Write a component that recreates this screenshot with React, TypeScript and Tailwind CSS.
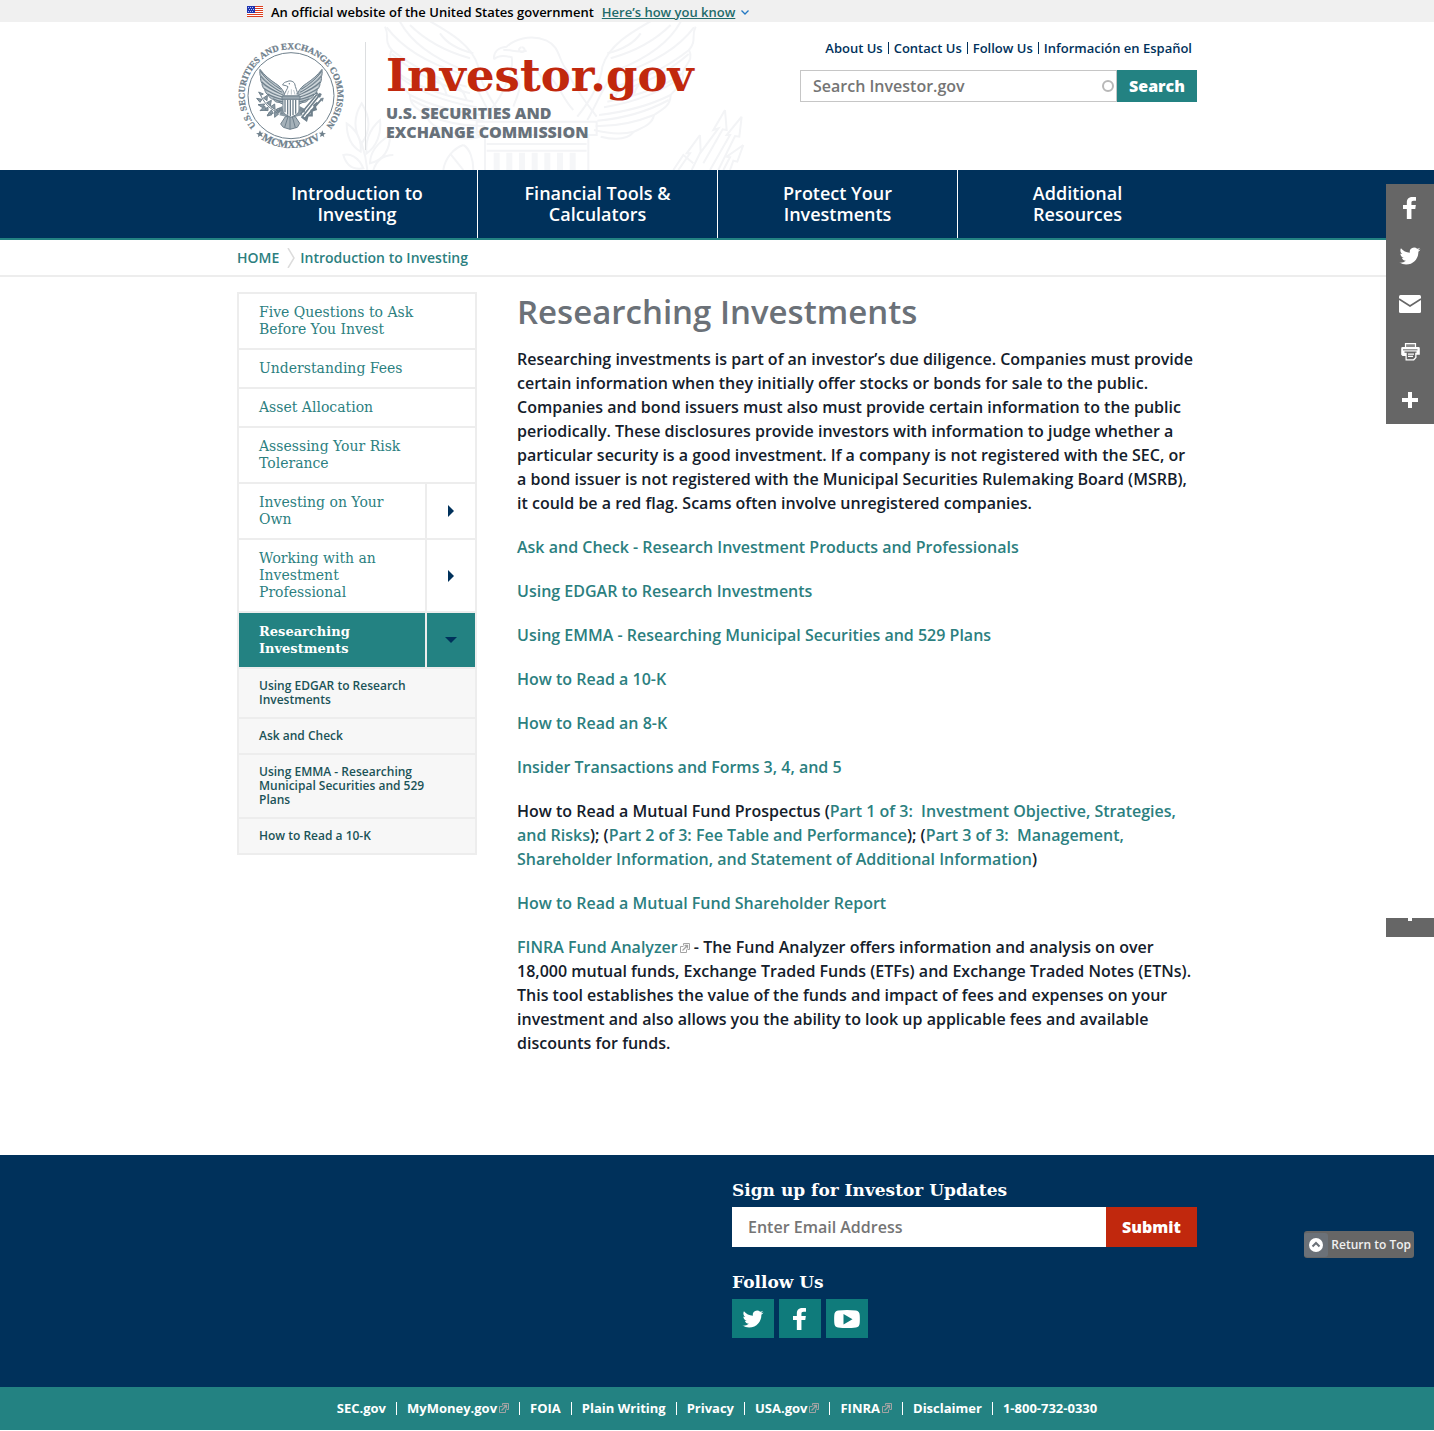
import React from 'react';

const TWITTER =
  'M28 8.557a9.913 9.913 0 0 1-2.828.775 4.93 4.93 0 0 0 2.166-2.725 9.738 9.738 0 0 1-3.13 1.194 4.92 4.92 0 0 0-3.593-1.55 4.924 4.924 0 0 0-4.794 6.049c-4.09-.21-7.72-2.17-10.15-5.15a4.942 4.942 0 0 0-.665 2.477c0 1.71.87 3.214 2.19 4.1a4.968 4.968 0 0 1-2.23-.616v.06c0 2.39 1.7 4.38 3.952 4.83-.414.115-.85.174-1.297.174-.318 0-.626-.03-.928-.086a4.935 4.935 0 0 0 4.6 3.42 9.893 9.893 0 0 1-6.114 2.107c-.398 0-.79-.023-1.175-.068a13.953 13.953 0 0 0 7.55 2.213c9.056 0 14.01-7.507 14.01-14.013 0-.213-.005-.426-.015-.637.96-.695 1.795-1.56 2.455-2.55z';
const FACEBOOK =
  'M22 5.16c-.406-.054-1.806-.16-3.43-.16-3.4 0-5.733 1.825-5.733 5.17v2.882H9v3.913h3.837V27h4.604V16.965h3.823l.587-3.913h-4.41v-2.5c0-1.123.347-1.903 2.198-1.903H22V5.16z';

function Glyph({ d, className }: { d: string; className: string }) {
  return (
    <svg viewBox="0 0 32 32" className={className} fill="currentColor" aria-hidden="true">
      <path d={d} />
    </svg>
  );
}

function FlagIcon() {
  return (
    <svg viewBox="0 0 16 11" className="h-[11px] w-4" shapeRendering="crispEdges" aria-hidden="true">
      <rect width="16" height="11" fill="#fff" />
      {[0, 2, 4, 6, 8, 10].map((y) => (
        <rect key={y} y={y} width="16" height="1" fill="#db3e1f" />
      ))}
      <rect width="8" height="7" fill="#1e33b1" />
      {[1, 3, 5].flatMap((y) => [1, 3, 5].map((x) => <rect key={`${x}-${y}`} x={x + (y === 3 ? 1 : 0)} y={y} width="1" height="1" fill="#b9c3ee" />))}
    </svg>
  );
}

function SealWing() {
  return (
    <g>
      <path
        d="M78 94 C77 104 77 110 80 116 C79 124 80 130 84 136 C84 144 87 150 92 154 C93 162 97 168 103 171 C105 178 111 183 118 184 C121 190 128 194 135 193 L150 200 L152 176 C152 160 140 146 124 136 C106 124 92 112 78 94Z"
        fill="#b4bfc6"
        stroke="#6f808c"
        strokeWidth="3"
      />
      <g stroke="#6f808c" strokeWidth="3.4" fill="none">
        <path d="M79 98 C92 120 112 138 140 154" />
        <path d="M80 114 C94 132 116 148 143 163" />
        <path d="M83 132 C97 146 118 158 146 170" />
        <path d="M90 151 C104 162 122 170 147 178" />
        <path d="M101 168 C114 176 130 181 148 185" />
        <path d="M117 182 C128 188 138 191 149 192" />
      </g>
      <g stroke="#fff" strokeWidth="1.4" fill="none">
        <path d="M82 109 C98 128 116 141 140 158" />
        <path d="M85 127 C100 142 120 153 143 167" />
        <path d="M90 146 C106 157 122 164 146 174" />
        <path d="M101 163 C114 171 130 176 147 181" />
      </g>
    </g>
  );
}

function Seal() {
  return (
    <svg viewBox="0 0 342 342" className="h-[114px] w-[114px]" role="img" aria-label="SEC seal">
      <defs>
        <path id="seal-top" d="M73 271 A139 139 0 1 1 269 271" />
        <path id="seal-bottom" d="M66 290 A157 157 0 0 0 276 290" />
      </defs>
      <circle cx="171" cy="173" r="129" fill="none" stroke="#6f808c" strokeWidth="3" />
      <g fill="#6f808c" stroke="#6f808c" strokeWidth="0.8" fontFamily="'Liberation Serif', serif" textAnchor="middle">
        <text fontSize="27">
          <textPath href="#seal-top" startOffset="50%">
            U.S. SECURITIES AND EXCHANGE COMMISSION
          </textPath>
        </text>
        <text fontSize="32">
          <textPath href="#seal-bottom" startOffset="50%">
            MCMXXXIV
          </textPath>
        </text>
      </g>
      <g fill="#6f808c">
        <path d="M78 277l3 7 8 0-6 5 3 8-8-4-6 5 1-8-7-4 8-1z" />
        <path d="M265 277l3 8 8 1-7 4 2 8-6-5-7 4 2-8-6-5 8 0z" />
      </g>
      <SealWing />
      <g transform="translate(342 0) scale(-1 1)">
        <SealWing />
      </g>
      <path d="M150 202 L136 232 L156 236 L152 268 L168 274 L186 268 L184 236 L206 232 L192 202Z" fill="#8c9ba5" />
      <path d="M154 236 L140 258 L148 268 L168 274 L190 268 L197 256 L184 236Z" fill="#a5b1b9" stroke="#6f808c" strokeWidth="3" />
      <g stroke="#6f808c" strokeWidth="3" fill="none">
        <path d="M162 236 L152 268 M168 236 V273 M175 236 L184 269" />
      </g>
      <path
        d="M149 174 C154 160 160 154 162 146 C156 142 150 142 146 141 C148 134 154 132 159 131 C166 127 177 128 182 137 C184 148 190 160 193 174Z"
        fill="#fff"
        stroke="#6f808c"
        strokeWidth="3"
      />
      <circle cx="166" cy="137" r="2.2" fill="#6f808c" />
      <g stroke="#9aa8b1" strokeWidth="2">
        <path d="M164 158l-4 12M172 154v16M179 156l4 14M187 164l2 8" />
      </g>
      <path d="M144 174 H198 V184 H144Z" fill="#9aa8b1" stroke="#6f808c" strokeWidth="3" />
      <path d="M147 184 H195 V216 C195 228 182 232 171 238 C160 232 147 228 147 216Z" fill="#fff" stroke="#6f808c" strokeWidth="3" />
      <path d="M153 185v38M161 185v45M169 185v50M177 185v47M185 185v42" stroke="#6f808c" strokeWidth="4" />
      <path d="M146 204 L126 214 L128 224 L146 220Z M196 204 L214 214 L212 224 L196 220Z" fill="#7b8b96" />
      <g stroke="#6f808c" strokeWidth="3" fill="#8c9ba5">
        <path d="M146 226 C122 224 96 206 80 172" fill="none" />
        <path d="M80 172 l-6 -10 14 6z M84 184 l-16 -3 10 12z M88 180 l12 -8 -1 16z M92 198 l-20 2 14 9z M98 194 l14 -7 -3 17z M102 208 l-18 8 18 2z M110 206 l12 -8 1 16z M112 216 l-12 16 18 -6z M122 220 l0 18 12 -10z M124 216 l12 -6 2 10z" />
        <path d="M92 204 l-14 14 18 -2z M106 222 l-6 12 14 -4z" />
      </g>
      <g stroke="#6f808c" strokeWidth="5" fill="#6f808c">
        <path d="M204 238 L256 172 M200 228 L248 170 M210 244 L262 184" />
        <path d="M256 166 l6 2 -4 10 -8 -4z M244 168 l4 -6 6 8z M260 182 l8 -2 -3 10z" strokeWidth="2" />
        <path d="M203 236 l14 10 4 -14 12 0 0 -14 12 -4 -4 -12 10 -8" fill="none" strokeWidth="7" />
      </g>
    </svg>
  );
}

function WatermarkWing() {
  return (
    <g>
      <path d="M165 20 C180 50 160 60 185 90 C170 120 195 130 205 160 C195 190 225 205 240 225 C240 260 270 270 290 285 C295 315 330 325 350 335 C370 360 410 360 450 350" />
      <path d="M205 -5 C235 60 300 110 400 150 C440 190 455 240 490 300" />
      <path d="M285 -5 C345 30 425 70 445 140 C450 190 480 240 520 290" />
      <path d="M170 22 C210 75 280 125 390 160" />
      <path d="M185 90 C235 130 310 175 410 200" />
      <path d="M186 102 C240 150 320 195 420 220" />
      <path d="M205 160 C260 200 330 225 430 245" />
      <path d="M210 172 C265 215 340 245 440 262" />
      <path d="M240 225 C300 255 370 275 455 285" />
      <path d="M246 240 C310 275 380 295 460 302" />
      <path d="M290 285 C340 305 400 320 465 318" />
      <path d="M350 335 C390 345 430 340 470 330" />
      <path d="M240 15 C290 65 350 95 420 115 M330 40 C350 70 390 90 430 100 M350 180 C380 190 400 210 410 240 M300 160 C330 180 345 200 350 225" />
    </g>
  );
}

function Watermark() {
  return (
    <svg viewBox="0 6 1290 444" className="absolute top-0 left-[93px] h-[148px] w-[430px]" fill="none" stroke="#f3f4f6" strokeWidth="6" aria-hidden="true">
      <WatermarkWing />
      <g transform="translate(1262 0) scale(-1 1)">
        <WatermarkWing />
      </g>
      <path d="M492 118 C490 95 505 82 530 80 C550 60 600 40 650 62 C690 80 685 120 710 150 C730 200 770 250 800 290" />
      <path d="M492 118 C505 105 530 108 545 112 C550 140 540 160 525 200 C510 240 480 270 460 300" />
      <path d="M520 90 C545 88 560 100 590 92 M575 82 a8 7 0 1 0 1 0 M600 120 C605 150 640 160 640 190 M560 170 C580 200 560 230 550 260 M660 170 C690 200 700 240 730 270" />
      <path d="M440 305 H800 V345 H440Z M470 372 H770 M470 392 H770 M465 345 V450 M775 345 V450" />
      <g strokeWidth="18" stroke="#f5f6f8">
        <path d="M500 398V450M538 398V450M576 398V450M614 398V450M652 398V450M690 398V450M728 398V450" />
      </g>
      <path d="M95 250 C70 290 70 330 95 370 C125 330 120 290 95 250Z M50 310 C50 350 65 380 92 395 C95 360 80 330 50 310Z M150 300 C115 330 105 370 110 400 C140 380 155 340 150 300Z M180 345 C140 370 120 400 120 430 C160 420 180 390 180 345Z M40 405 C60 400 85 410 100 445 C70 450 50 440 40 405Z M190 405 C160 405 140 420 130 450 M95 370 C105 400 110 430 112 450" />
      <path d="M400 375 C370 385 345 415 340 450 M400 375 C420 385 430 420 430 450 M360 400 L400 450" />
      <path d="M1185 270 L1150 330 L1165 325 L1110 400 M1185 270 L1190 330 L1178 328 L1120 430 M1235 290 L1190 345 L1200 345 L1140 450 M1235 290 L1228 350 L1215 348 L1165 450 M1240 375 L1190 410 L1200 412 L1180 450 M1240 375 L1222 425 L1210 422 L1200 450 M1110 345 L1070 400 L1080 400 L1045 450 M1110 345 L1112 395 L1085 450" />
      <path d="M1030 450 L1060 405 L1090 430" />
    </svg>
  );
}

function ExternalMark() {
  return (
    <svg viewBox="0 0 10 10" className="ml-0.5 inline-block h-2.5 w-2.5 align-baseline" fill="none" stroke="#a3a3a3" strokeWidth="1" aria-hidden="true">
      <path d="M3.5 3.5h-3v6h6v-3" />
      <path d="M3.5 2.500v-2h6v6h-2" />
      <path d="M2.500 7.500L7 3M4.500 2.500h3v3" strokeWidth="1.300" />
    </svg>
  );
}

const utilityLinks = ['About Us', 'Contact Us', 'Follow Us', 'Información en Español'];
const navItems = ['Introduction to Investing', 'Financial Tools & Calculators', 'Protect Your Investments', 'Additional Resources'];
const sideItems = [
  { label: 'Five Questions to Ask Before You Invest', toggle: false },
  { label: 'Understanding Fees', toggle: false },
  { label: 'Asset Allocation', toggle: false },
  { label: 'Assessing Your Risk Tolerance', toggle: false },
  { label: 'Investing on Your Own', toggle: true },
  { label: 'Working with an Investment Professional', toggle: true },
];
const subItems = ['Using EDGAR to Research Investments', 'Ask and Check', 'Using EMMA - Researching Municipal Securities and 529 Plans', 'How to Read a 10-K'];
const topics = [
  'Ask and Check - Research Investment Products and Professionals',
  'Using EDGAR to Research Investments',
  'Using EMMA - Researching Municipal Securities and 529 Plans',
  'How to Read a 10-K',
  'How to Read an 8-K',
  'Insider Transactions and Forms 3, 4, and 5',
];
const footerLinks = [
  { label: 'SEC.gov' },
  { label: 'MyMoney.gov', external: true },
  { label: 'FOIA' },
  { label: 'Plain Writing' },
  { label: 'Privacy' },
  { label: 'USA.gov', external: true },
  { label: 'FINRA', external: true },
  { label: 'Disclaimer' },
  { label: '1-800-732-0330' },
];

function A({ children }: { children: React.ReactNode }) {
  return (
    <a href="#" className="text-[#2c7f7f]">
      {children}
    </a>
  );
}

function ShareBar() {
  const button = 'flex h-12 w-12 items-center justify-center';
  return (
    <div className="absolute top-[184px] right-0 flex w-12 flex-col bg-[#666666] text-white">
      <button className={button} aria-label="Facebook">
        <Glyph d={FACEBOOK} className="h-8 w-8" />
      </button>
      <button className={button} aria-label="Twitter">
        <Glyph d={TWITTER} className="h-7 w-7" />
      </button>
      <button className={button} aria-label="Email">
        <svg viewBox="0 0 22 18" className="h-[18px] w-[22px]" aria-hidden="true">
          <rect width="22" height="18" rx="1.500" fill="#fff" />
          <path d="M0 4 L11 11 L22 4" fill="none" stroke="#666" strokeWidth="1.600" />
        </svg>
      </button>
      <button className={button} aria-label="Print">
        <svg viewBox="0 0 19 18" className="h-[18px] w-[19px]" aria-hidden="true">
          <path d="M4.500 0.700h10v3.800h-10z" fill="#888" stroke="#fff" strokeWidth="1.200" />
          <path d="M1.500 4h16a1.300 1.300 0 0 1 1.300 1.300v6.500h-3.300v3l-2.500 2.700h-8.500v-4.500h-3l-1.300-1.200v-6.500a1.300 1.300 0 0 1 1.300-1.300z" fill="#fff" />
          <path d="M2 6h14.500v1.500h-14.500z" fill="#999" />
          <path d="M3.500 8.500h12v1.300h-1.300v4.500l-2 2h-6.500v-6.500h-2.200z" fill="#666" />
          <path d="M7 10.500h6v1.200h-6zM7 12.800h5v1.200h-5z" fill="#fff" />
        </svg>
      </button>
      <button className={button} aria-label="More">
        <svg viewBox="0 0 16 16" className="h-4 w-4" aria-hidden="true">
          <path d="M6 0h4v6h6v4h-6v6h-4v-6h-6v-4h6z" fill="#fff" />
        </svg>
      </button>
    </div>
  );
}

export default function App() {
  return (
    <div className="relative bg-white font-['Open_Sans',sans-serif] text-base font-semibold text-[#14202b]">
      <div className="bg-[#f0f0f0]">
        <div className="mx-auto flex h-[22px] w-full max-w-[960px] items-center px-2.5 pt-px text-[13px] leading-5 text-black">
          <FlagIcon />
          <span className="ml-2">An official website of the United States government</span>
          <button className="ml-2 flex items-center text-[#1f6b6b]">
            <span className="underline">Here’s how you know</span>
            <svg viewBox="0 0 8 5" className="mt-0.5 ml-1.5 h-[5px] w-2" fill="none" stroke="#2378c3" strokeWidth="1.300" aria-hidden="true">
              <path d="M0.500 0.500 L4 4 L7.500 0.500" />
            </svg>
          </button>
        </div>
      </div>

      <header>
        <div className="relative mx-auto flex h-[148px] w-full max-w-[960px]">
          <Watermark />
          <div className="relative -ml-[3px] pt-4">
            <Seal />
          </div>
          <div className="relative mt-5 ml-[17px] h-[108px] border-l border-[#dcdee0] pl-5">
            <a href="#" className="block pt-1.5 font-['DejaVu_Serif',serif] text-[45px] leading-[56px] font-bold text-[#c1280d]">
              Investor.gov
            </a>
            <p className="text-base leading-[19px] font-extrabold text-[#68717a]">
              U.S. SECURITIES AND
              <br />
              EXCHANGE COMMISSION
            </p>
          </div>
          <div className="relative ml-auto w-[397px] pt-4">
            <ul className="flex justify-end pr-[5px] text-[13px] leading-5 text-[#00315b]">
              {utilityLinks.map((label, i) => (
                <li key={label} className="flex items-center">
                  {i > 0 && <span className="mx-[5px] h-3 w-px bg-[#00315b]" />}
                  <a href="#">{label}</a>
                </li>
              ))}
            </ul>
            <form className="mt-3 flex h-8" onSubmit={(e) => e.preventDefault()}>
              <div className="relative flex flex-1">
                <input aria-label="Search Investor.gov" placeholder="Search Investor.gov" className="w-full border border-[#c6c6c6] bg-white px-3 text-base outline-none placeholder:text-[#757575]" />
                <span className="absolute top-2.5 right-[3px] h-3 w-3 rounded-full border-2 border-[#b8b8b8]" />
              </div>
              <button className="w-20 bg-[#238282] text-base font-extrabold text-white">Search</button>
            </form>
          </div>
        </div>
      </header>

      <nav className="border-b-2 border-[#238282] bg-[#00315b]">
        <ul className="mx-auto grid w-full max-w-[960px] grid-cols-4">
          {navItems.map((label, i) => (
            <li key={label} className={i > 0 ? 'border-l border-white' : ''}>
              <a href="#" className="flex h-[68px] items-center justify-center px-10 text-center text-lg leading-[21px] text-white">
                {label}
              </a>
            </li>
          ))}
        </ul>
      </nav>

      <div className="border-b-2 border-[#ededed]">
        <div className="mx-auto flex h-[35px] w-full max-w-[960px] items-center text-sm text-[#2c7f7f]">
          <a href="#">HOME</a>
          <svg viewBox="0 0 8 20" className="mr-[5px] ml-2 h-5 w-2" fill="none" stroke="#dcdcdc" strokeWidth="1.500" aria-hidden="true">
            <path d="M1 0 L7 10 L1 20" />
          </svg>
          <a href="#">Introduction to Investing</a>
        </div>
      </div>

      <div className="mx-auto flex w-full max-w-[960px] items-start gap-10 pt-[15px] pb-[100px]">
        <aside className="w-60 shrink-0 border-2 border-b-0 border-[#ededed] font-['DejaVu_Serif',serif] text-sm leading-[17px] font-normal text-[#2c7f7f]">
          <ul>
            {sideItems.map((item) => (
              <li key={item.label} className="flex border-b-2 border-[#ededed]">
                <a href="#" className={item.toggle ? 'flex-1 px-5 py-2.5' : 'flex-1 py-2.5 pr-10 pl-5'}>
                  {item.label}
                </a>
                {item.toggle && (
                  <button className="flex w-[50px] items-center justify-center border-l-2 border-[#ededed]" aria-label={`Expand ${item.label}`}>
                    <svg viewBox="0 0 6 12" className="h-3 w-1.5" fill="#00315b" aria-hidden="true">
                      <path d="M0 0 L6 6 L0 12Z" />
                    </svg>
                  </button>
                )}
              </li>
            ))}
            <li>
              <div className="flex border-b-2 border-[#ededed] bg-[#238282] text-white">
                <a href="#" className="flex-1 px-5 py-2.5 text-[13px] leading-[17px] font-bold">
                  Researching Investments
                </a>
                <button className="flex w-[50px] items-center justify-center border-l-2 border-[#ededed]" aria-label="Collapse Researching Investments">
                  <svg viewBox="0 0 12 6" className="h-1.5 w-3" fill="#00315b" aria-hidden="true">
                    <path d="M0 0 H12 L6 6Z" />
                  </svg>
                </button>
              </div>
              <ul className="bg-[#f7f7f7] font-['Open_Sans',sans-serif] text-xs leading-[14px] font-semibold text-[#1b5357]">
                {subItems.map((label) => (
                  <li key={label} className="border-b-2 border-[#ededed]">
                    <a href="#" className="block py-2.5 pr-10 pl-5">
                      {label}
                    </a>
                  </li>
                ))}
              </ul>
            </li>
          </ul>
        </aside>

        <main className="min-w-0 flex-1 leading-6">
          <h1 className="text-[33px] leading-10 text-[#6b7178]">Researching Investments</h1>
          <div className="mt-[15px] flex flex-col gap-5">
            <p>
              Researching investments is part of an investor’s due diligence. Companies must provide certain information when they initially offer stocks or bonds for sale to the public. Companies and bond issuers must also must provide certain
              information to the public periodically. These disclosures provide investors with information to judge whether a particular security is a good investment. If a company is not registered with the SEC, or a bond issuer is not
              registered with the Municipal Securities Rulemaking Board (MSRB), it could be a red flag. Scams often involve unregistered companies.
            </p>
            {topics.map((topic) => (
              <p key={topic}>
                <A>{topic}</A>
              </p>
            ))}
            <p>
              How to Read a Mutual Fund Prospectus (<A>Part 1 of 3:&nbsp; Investment Objective, Strategies, and Risks</A>); (<A>Part 2 of 3: Fee Table and Performance</A>); (
              <A>Part 3 of 3:&nbsp; Management, Shareholder Information, and Statement of Additional Information</A>)
            </p>
            <p>
              <A>How to Read a Mutual Fund Shareholder Report</A>
            </p>
            <p>
              <A>
                FINRA Fund Analyzer
                <ExternalMark />
              </A>{' '}
              - The Fund Analyzer offers information and analysis on over 18,000 mutual funds, Exchange Traded Funds (ETFs) and Exchange Traded Notes (ETNs). This tool establishes the value of the funds and impact of fees and expenses on your
              investment and also allows you the ability to look up applicable fees and available discounts for funds.
            </p>
          </div>
        </main>
      </div>

      <footer className="relative text-white">
        <div className="bg-[#00315b]">
          <div className="mx-auto flex w-full max-w-[960px] justify-end pt-[22px] pb-[49px]">
            <div className="w-[465px]">
              <form onSubmit={(e) => e.preventDefault()}>
                <label htmlFor="email" className="block font-['DejaVu_Serif',serif] text-[17px] leading-[26px] font-bold">
                  Sign up for Investor Updates
                </label>
                <div className="mt-1 flex h-10">
                  <input id="email" type="email" placeholder="Enter Email Address" className="min-w-0 flex-1 bg-white px-4 text-base text-[#1b1b1b] outline-none placeholder:text-[#757575]" />
                  <button className="w-[91px] bg-[#c1280d] text-base font-extrabold">Submit</button>
                </div>
              </form>
              <h2 className="mt-[22px] font-['DejaVu_Serif',serif] text-[17px] leading-[26px] font-bold">Follow Us</h2>
              <div className="mt-1 flex gap-[5px]">
                <a href="#" aria-label="Twitter" className="flex h-[39px] w-[42px] items-center justify-center bg-[#0f7b7b]">
                  <Glyph d={TWITTER} className="h-7 w-7" />
                </a>
                <a href="#" aria-label="Facebook" className="flex h-[39px] w-[42px] items-center justify-center bg-[#0f7b7b]">
                  <Glyph d={FACEBOOK} className="h-8 w-8" />
                </a>
                <a href="#" aria-label="YouTube" className="flex h-[39px] w-[42px] items-center justify-center bg-[#0f7b7b]">
                  <svg viewBox="0 0 26 18" className="h-[18px] w-[26px]" aria-hidden="true">
                    <path d="M4 0.500 Q13 -0.500 22 0.500 Q25.500 1 25.700 5 Q26 9 25.700 13 Q25.500 17 22 17.500 Q13 18.500 4 17.500 Q0.500 17 0.300 13 Q0 9 0.300 5 Q0.500 1 4 0.500Z" fill="#fff" />
                    <path d="M9.500 4 V14.500 L18.500 9.200Z" fill="#0f7b7b" />
                  </svg>
                </a>
              </div>
            </div>
          </div>
        </div>
        <div className="bg-[#238282]">
          <ul className="mx-auto flex h-[43px] w-full max-w-[960px] items-center justify-center text-[13px] font-bold">
            {footerLinks.map((link, i) => (
              <li key={link.label} className="flex items-center">
                {i > 0 && <span className="mx-2.5 h-[13px] w-px bg-white" />}
                <a href="#">
                  {link.label}
                  {link.external && <ExternalMark />}
                </a>
              </li>
            ))}
          </ul>
        </div>
        <button className="absolute top-[76px] right-5 flex h-[27px] items-center rounded-[3px] bg-[#666666] pr-[3px] text-xs text-[#f0f0f0]">
          <span className="mr-[3px] flex h-6 w-6 items-center justify-center rounded-[3px] bg-[#6b7178]">
            <svg viewBox="0 0 14 14" className="h-3.5 w-3.5" aria-hidden="true">
              <circle cx="7" cy="7" r="7" fill="#fff" />
              <path d="M3.500 8.500 L7 5 L10.500 8.500" fill="none" stroke="#6b7178" strokeWidth="2" />
            </svg>
          </span>
          Return to Top
        </button>
      </footer>

      <ShareBar />
      <div className="absolute top-[918px] right-0 flex h-[19px] w-12 justify-center bg-[#666666]">
        <span className="h-[3px] w-1 bg-white" />
      </div>
    </div>
  );
}
